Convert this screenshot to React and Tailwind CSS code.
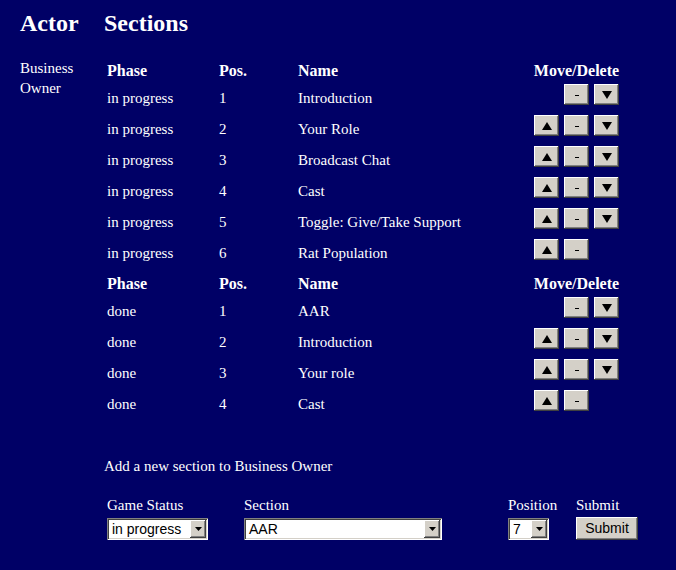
import React from "react";

const serif = { fontFamily: '"Liberation Serif", "Times New Roman", serif' };
const sans = { fontFamily: '"Liberation Sans", Arial, sans-serif' };

const inProgress = [
  { pos: 1, name: "Introduction", up: false, down: true },
  { pos: 2, name: "Your Role", up: true, down: true },
  { pos: 3, name: "Broadcast Chat", up: true, down: true },
  { pos: 4, name: "Cast", up: true, down: true },
  { pos: 5, name: "Toggle: Give/Take Support", up: true, down: true },
  { pos: 6, name: "Rat Population", up: true, down: false },
];
const done = [
  { pos: 1, name: "AAR", up: false, down: true },
  { pos: 2, name: "Introduction", up: true, down: true },
  { pos: 3, name: "Your role", up: true, down: true },
  { pos: 4, name: "Cast", up: true, down: false },
];

const bevel =
  "bg-[#d4d0c8] shadow-[inset_-1px_-1px_#404040,inset_1px_1px_#ffffff,inset_-2px_-2px_#808080,inset_2px_2px_#d4d0c8]";

function Btn({ children }) {
  return (
    <div className={`w-[25px] h-[21px] flex items-center justify-center text-black ${bevel}`}>
      {children}
    </div>
  );
}

function Up() {
  return (
    <svg width="10" height="8" viewBox="0 0 10 8">
      <polygon points="5,0 10,8 0,8" fill="#000" />
    </svg>
  );
}
function Down() {
  return (
    <svg width="10" height="8" viewBox="0 0 10 8">
      <polygon points="0,0 10,0 5,8" fill="#000" />
    </svg>
  );
}
function Dash() {
  return <div className="w-[4px] h-[1px] bg-black mt-[1px]" />;
}

function HeaderRow() {
  return (
    <div className="grid grid-cols-[112px_79px_233px_97px] h-[27px] font-bold text-[16px] leading-[17px]">
      <div className="pl-[3px] pt-[5px]">Phase</div>
      <div className="pl-[3px] pt-[5px]">Pos.</div>
      <div className="pl-[3px] pt-[5px]">Name</div>
      <div className="pt-[5px] text-center">Move/Delete</div>
    </div>
  );
}

function Row({ phase, r }) {
  return (
    <div className="grid grid-cols-[112px_79px_233px_97px] h-[31px] text-[15px] leading-[17px]">
      <div className="pl-[3px] pt-[6px]">{phase}</div>
      <div className="pl-[3px] pt-[6px]">{r.pos}</div>
      <div className="pl-[3px] pt-[6px]">{r.name}</div>
      <div className="pl-[6px] flex gap-[5px]">
        <div className="w-[25px]">{r.up && <Btn><Up /></Btn>}</div>
        <div className="w-[25px]"><Btn><Dash /></Btn></div>
        <div className="w-[25px]">{r.down && <Btn><Down /></Btn>}</div>
      </div>
    </div>
  );
}

function Select({ value, width }) {
  return (
    <div
      className={`${width} h-[22px] bg-white flex items-center p-[2px] shadow-[inset_1px_1px_#808080,inset_-1px_-1px_#ffffff,inset_2px_2px_#404040,inset_-2px_-2px_#d4d0c8]`}
    >
      <div className="flex-1 pl-[3px] text-[14px] leading-[18px] text-black overflow-hidden whitespace-nowrap" style={sans}>
        {value}
      </div>
      <div className={`w-[16px] h-[18px] flex items-center justify-center ${bevel}`}>
        <svg width="7" height="4" viewBox="0 0 7 4">
          <polygon points="0,0 7,0 3.5,4" fill="#000" />
        </svg>
      </div>
    </div>
  );
}

export default function App() {
  return (
    <div className="min-h-[570px] w-full bg-[#000066] text-white" style={serif}>
      <div className="flex pl-[20px] pt-[9px] text-[24px] leading-[28px] font-bold">
        <div className="w-[84px]">Actor</div>
        <div>Sections</div>
      </div>
      <div className="flex pl-[20px] mt-[20px]">
        <div className="w-[84px] pt-[1px] text-[15px] leading-[20px]">Business Owner</div>
        <div className="flex flex-col">
          <HeaderRow />
          {inProgress.map((r) => (
            <Row key={"p" + r.pos} phase="in progress" r={r} />
          ))}
          <HeaderRow />
          {done.map((r) => (
            <Row key={"d" + r.pos} phase="done" r={r} />
          ))}
        </div>
      </div>
      <div className="pl-[104px] mt-[37px] text-[15px] leading-[17px]">
        Add a new section to Business Owner
      </div>
      <div className="flex pl-[107px] mt-[22px] text-[15px] leading-[17px]">
        <div className="w-[137px] flex flex-col">
          <div>Game Status</div>
          <div className="mt-[4px]">
            <Select value="in progress" width="w-[101px]" />
          </div>
        </div>
        <div className="w-[264px] flex flex-col">
          <div>Section</div>
          <div className="mt-[4px]">
            <Select value="AAR" width="w-[198px]" />
          </div>
        </div>
        <div className="w-[68px] flex flex-col">
          <div>Position</div>
          <div className="mt-[4px]">
            <Select value="7" width="w-[41px]" />
          </div>
        </div>
        <div className="flex flex-col">
          <div>Submit</div>
          <div className="mt-[3px]">
            <div
              className={`w-[62px] h-[23px] flex items-center justify-center text-black text-[14px] ${bevel}`}
              style={sans}
            >
              Submit
            </div>
          </div>
        </div>
      </div>
    </div>
  );
}
